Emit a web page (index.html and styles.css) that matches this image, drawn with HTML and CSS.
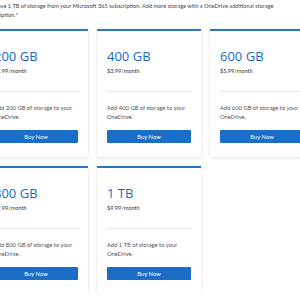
FILE: index.html
```html
<!DOCTYPE html>
<html>
<head>
<meta charset="utf-8">
<link rel="stylesheet" href="styles.css">
</head>
<body>
<div class="page">
  <p class="intro">You have 1 TB of storage from your Microsoft 365 subscription. Add more storage with a OneDrive additional storage subscription.*</p>
  <div class="grid">
    <div class="card">
      <h2 class="size">200 GB</h2>
      <p class="price">$1.99/month</p>
      <hr class="rule">
      <p class="desc">Add 200 GB of storage to your OneDrive.</p>
      <button class="buy">Buy Now</button>
    </div>
    <div class="card">
      <h2 class="size">400 GB</h2>
      <p class="price">$3.99/month</p>
      <hr class="rule">
      <p class="desc">Add 400 GB of storage to your OneDrive.</p>
      <button class="buy">Buy Now</button>
    </div>
    <div class="card">
      <h2 class="size">600 GB</h2>
      <p class="price">$5.99/month</p>
      <hr class="rule">
      <p class="desc">Add 600 GB of storage to your OneDrive.</p>
      <button class="buy">Buy Now</button>
    </div>
    <div class="card">
      <h2 class="size">800 GB</h2>
      <p class="price">$7.99/month</p>
      <hr class="rule">
      <p class="desc">Add 800 GB of storage to your OneDrive.</p>
      <button class="buy">Buy Now</button>
    </div>
    <div class="card">
      <h2 class="size">1 TB</h2>
      <p class="price">$9.99/month</p>
      <hr class="rule">
      <p class="desc">Add 1 TB of storage to your OneDrive.</p>
      <button class="buy">Buy Now</button>
    </div>
  </div>
</div>
</body>
</html>
```
FILE: styles.css
```css
html, body {
  margin: 0;
  padding: 0;
  background: #ffffff;
  overflow: hidden;
}
body {
  font-family: "Lato", "Open Sans", sans-serif;
  color: #444;
}
.page {
  margin-left: -16px;
  width: 329px;
}
.intro {
  margin: 0;
  padding-top: 1px;
  width: 302px;
  font-size: 5.65px;
  line-height: 9px;
  color: #444;
}
.grid {
  margin-top: 10px;
  display: grid;
  grid-template-columns: repeat(3, 104px);
  column-gap: 9px;
  row-gap: 9px;
}
.card {
  height: 128px;
  box-sizing: border-box;
  border-top: 2px solid #2a74c9;
  background: #fff;
  box-shadow: 0 1px 3px rgba(0,0,0,0.12), 0 0 1px rgba(0,0,0,0.08);
  padding: 18px 10px 0 10px;
  display: flex;
  flex-direction: column;
}
.size {
  margin: 0;
  font-family: "Open Sans", "Noto Sans", sans-serif;
  font-weight: 500;
  font-size: 13px;
  line-height: 14px;
  color: #1a6bc4;
}
.price {
  margin: 4px 0 0 0;
  font-size: 5.6px;
  line-height: 8px;
  color: #333;
}
.rule {
  margin: 16px 0 0 0;
  border: 0;
  border-top: 1px solid #e6e6e6;
  height: 0;
}
.desc {
  margin: 11px 0 0 0;
  font-size: 5.8px;
  line-height: 9px;
  color: #555;
}
.buy {
  margin-top: 9px;
  height: 13px;
  border: 0;
  border-radius: 1px;
  background: #1b6ec8;
  color: #fff;
  font-family: "Lato", "Open Sans", sans-serif;
  font-size: 5.8px;
  padding: 0;
}
```
